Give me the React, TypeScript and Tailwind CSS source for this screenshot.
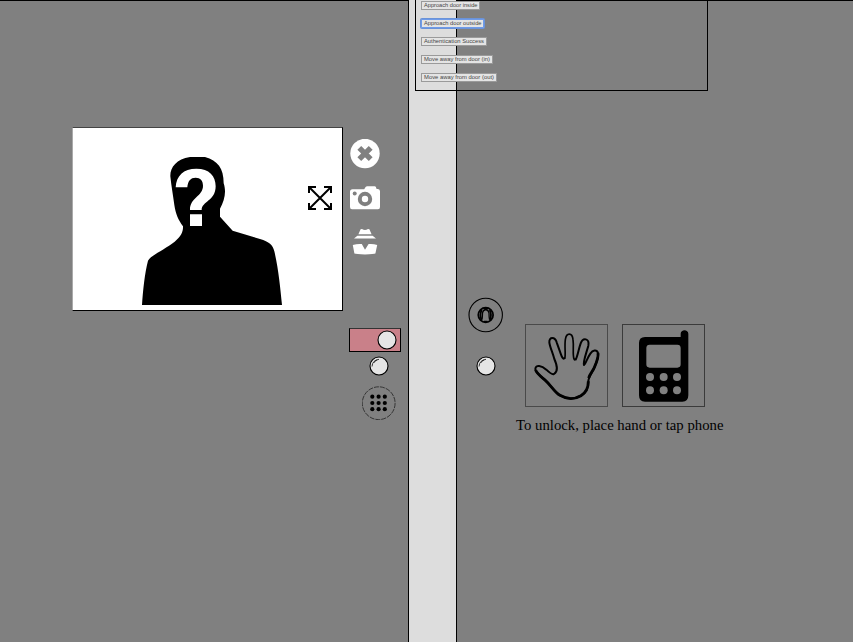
import React from "react";

const actions = [
  { label: "Approach door inside", width: "w-[59px]", text: 53.5, focused: false },
  { label: "Approach door outside", width: "w-[63px]", text: 57.5, focused: true },
  { label: "Authentication Success", width: "w-[66px]", text: 60, focused: false },
  { label: "Move away from door (in)", width: "w-[72px]", text: 66, focused: false },
  { label: "Move away from door (out)", width: "w-[76px]", text: 70, focused: false },
];

function ControlPanel() {
  return (
    <div className="absolute left-[415px] top-0 flex h-[91px] w-[293px] flex-col items-start gap-[9px] border border-t-0 border-black pl-[5px] pt-[0.5px]">
      {actions.map((a) => (
        <button
          key={a.label}
          className={`${a.width} flex h-[9px] shrink-0 items-center justify-center border bg-[#e4e4e4] p-0 font-['Liberation_Sans',Arial,sans-serif] text-[6px] leading-none text-[#444] ${
            a.focused ? "border-[#6f9be8] ring-1 ring-[#6b93d8] rounded-[1px]" : "border-[#9a9a9a]"
          }`}
        >
          <svg width={a.text} height="7" className="block shrink-0 overflow-visible">
            <text x="0" y="5.2" fontSize="6.1" textLength={a.text} lengthAdjust="spacingAndGlyphs" fill="#444">
              {a.label}
            </text>
          </svg>
        </button>
      ))}
    </div>
  );
}

function Silhouette() {
  return (
    <svg width="160" height="170" viewBox="0 0 480 510" className="block shrink-0">
      <path d="M36 480C39 436 44 386 54 347C64 330 105 313 134 290C153 274 160 260 159 244C145 225 137 207 133 180C129 151 124 123 121 94C120 68 139 42 180 36H225C263 47 281 69 281 115C290 142 283 166 270 191V215L308 257L390 282C418 291 428 299 433 319C445 369 451 429 456 480Z" />
      <path
        fill="#fff"
        d="M137 127C139 92 160 71 199 71C238 71 257 93 257 124C257 168 215 169 215 195H180C179 158 219 154 219 122C219 106 211 98 197 98C181 98 174 108 172 127ZM180 208H216V243H180Z"
      />
    </svg>
  );
}

function ExpandIcon() {
  return (
    <svg width="24" height="24" viewBox="0 0 24 24" fill="none" stroke="#000" strokeWidth="2">
      <path d="M1 1L23 23M23 1L1 23" />
      <path d="M1 7V1H8M16 1H23V7M1 17V23H8M16 23H23V17" />
    </svg>
  );
}

function CloseIcon() {
  return (
    <svg width="30" height="30" viewBox="0 0 30 30">
      <circle cx="15" cy="14.5" r="14.7" fill="#fff" />
      <path d="M9.3 8.8L20.7 20.2M20.7 8.8L9.3 20.2" stroke="gray" strokeWidth="5.4" />
    </svg>
  );
}

function CameraIcon() {
  return (
    <svg width="30" height="24" viewBox="0 0 30 24">
      <path fill="#fff" d="M2.5 3.2H14.2L15.6 1Q16.2 0.2 17.2 0.2H24.6Q25.6 0.2 25.9 1L26.6 3H28Q30 3.2 30 5.2V21Q30 23.2 28 23.2H2Q0 23.2 0 21V5.7Q0 3.2 2.5 3.2Z" />
      <circle cx="4.7" cy="7.5" r="2" fill="gray" />
      <circle cx="15" cy="13" r="5.2" fill="none" stroke="gray" strokeWidth="4" />
    </svg>
  );
}

function DisguiseIcon() {
  return (
    <svg width="26" height="26" viewBox="0 0 26 26" fill="#fff">
      <path d="M8.6 .3L10 0Q13 2.2 16 0L17.4 .3L19.6 5.2H6.4ZM5.4 6.8H20.6L24 9.6H2Z" />
      <path d="M.8 16Q5.5 14.5 9.8 15L13 20.8L16.6 15Q21 14.5 25.2 16L23.4 24.6Q22 25.4 13 25.4Q4 25.4 2.4 24.6Z" />
    </svg>
  );
}

function Knob() {
  return (
    <svg width="20" height="20" viewBox="0 0 20 20">
      <circle cx="10" cy="10" r="9" fill="#e5e5e5" stroke="#000" strokeWidth="1.1" />
      <path d="M3 10.5Q3.4 4.2 10 3.3M4.7 7Q6 4.5 8.2 4" fill="none" stroke="#222" strokeWidth=".9" />
    </svg>
  );
}

function Keypad() {
  return (
    <svg width="34" height="34" viewBox="0 0 34 34">
      <circle cx="16.7" cy="17.2" r="16.4" fill="none" stroke="#222" strokeWidth=".8" strokeDasharray="5 1" />
      {[10.7, 17, 23.2].map((y) =>
        [10.3, 16.6, 22.8].map((x) => <circle key={`${x}-${y}`} cx={x} cy={y} r="2.1" />)
      )}
    </svg>
  );
}

function Doorbell() {
  return (
    <svg width="36" height="36" viewBox="0 0 36 36" fill="none" stroke="#000">
      <circle cx="17.7" cy="18" r="16.7" strokeWidth="1.1" />
      <circle cx="17.7" cy="18" r="7.4" strokeWidth="1.8" />
      <path d="M13.7 13Q11.2 18 13.7 23M21.7 13Q24.2 18 21.7 23" strokeWidth="1.8" />
      <path d="M14 22.3Q14.5 20 14.5 16Q15 13 17.7 12.5Q20.5 13 21 16Q21 20 21.5 22.3" strokeWidth="1.3" />
      <path d="M15.5 11.5H20M16 24.5H19.5" strokeWidth="1.4" />
    </svg>
  );
}

function Hand() {
  return (
    <svg width="81" height="81" viewBox="19 21 243 243" fill="none" stroke="#000" strokeLinejoin="round">
      <path
        strokeWidth="6"
        d="M135 119C131 129 126 115 122 104L111 73C106 56 88 56 89 73C90 85 99 104 104 123C113 143 115 161 103 168C96 171 88 163 80 155C66 142 48 139 47 153C47 163 62 173 77 187C94 202 105 223 121 232C143 245 165 244 184 233C201 223 207 209 206 190C207 175 220 162 225 146C232 130 237 117 235 105C231 93 219 97 212 107C203 120 197 139 193 141C189 134 200 105 206 83C210 61 190 57 183 76C177 92 173 119 167 126"
      />
      <path strokeWidth="5" d="M135 122C139 112 134 86 137 65C140 43 158 43 160 65C163 87 158 108 163 123Q165 129 168 122" />
      <path strokeWidth="8.5" d="M48 156C50 166 68 179 77 187C94 202 105 223 121 232C143 245 165 244 184 233C201 223 206 209 206 190M207 180C210 168 220 159 225 146C232 130 237 117 235 105" />
    </svg>
  );
}

function Phone() {
  return (
    <svg width="81" height="81" viewBox="21 21 243 243">
      <path
        fillRule="evenodd"
        d="M87 57H194V47C194 33 217 33 217 47V232Q217 251 199 251H87Q69 251 69 232V75Q69 57 87 57ZM101 80Q91 80 91 90V139Q91 149 101 149H184Q194 149 194 139V90Q194 80 184 80Z"
      />
      {[177, 217].map((y) =>
        [102, 143, 183].map((x) => <circle key={`${x}-${y}`} cx={x} cy={y} r="12" fill="gray" />)
      )}
    </svg>
  );
}

export default function App() {
  return (
    <div className="relative flex h-[642px] w-[853px] overflow-hidden bg-[#808080]">
      <section className="flex w-[408px] shrink-0 flex-col border-t border-black pt-[126px]">
        <div className="flex pl-[72px]">
          <div className="flex h-[184px] w-[271px] items-start border border-t-[#444] border-r-black border-b-black border-l-[#aaa] bg-white pl-[57px] pt-[17px]">
            <Silhouette />
            <div className="ml-[18px] mt-[40.5px] shrink-0">
              <ExpandIcon />
            </div>
          </div>
          <div className="flex flex-col items-center pl-[7px] pt-[12px]">
            <CloseIcon />
            <div className="mt-[17px]">
              <CameraIcon />
            </div>
            <div className="mt-[18.5px] h-[26px]">
              <DisguiseIcon />
            </div>
          </div>
        </div>
        <div className="ml-[349px] mt-[17px] flex h-[24px] w-[52px] items-center justify-end border border-black border-t-[#333] bg-[#c98089] pr-[3px]">
          <svg width="20" height="20" viewBox="0 0 20 20">
            <circle cx="10" cy="10" r="9" fill="#e5e5e5" stroke="#000" strokeWidth="1.1" />
          </svg>
        </div>
        <div className="ml-[368.5px] mt-[3.5px] h-[20px]">
          <Knob />
        </div>
        <div className="ml-[362px] mt-[10.5px]">
          <Keypad />
        </div>
      </section>

      <div className="w-[49px] shrink-0 border-x border-black bg-[#dddddd]" />

      <section className="flex flex-1 border-t border-black">
        <div className="flex flex-col items-center pl-[11px] pt-[296px]">
          <Doorbell />
          <div className="mt-[22.5px] pr-[1px]">
            <Knob />
          </div>
        </div>
        <div className="flex flex-col items-center pl-[12px] pt-[323px]">
          <div className="flex gap-[14px] pr-[9px]">
            <div className="h-[83px] w-[83px] border border-[#4a4a4a]">
              <Hand />
            </div>
            <div className="h-[83px] w-[83px] border border-[#3b3b3b]">
              <Phone />
            </div>
          </div>
          <p className="mt-[9px] whitespace-nowrap font-['Liberation_Serif','Times_New_Roman',serif] text-[14.76px] leading-[19px] text-black">
            To unlock, place hand or tap phone
          </p>
        </div>
      </section>

      <ControlPanel />
    </div>
  );
}
